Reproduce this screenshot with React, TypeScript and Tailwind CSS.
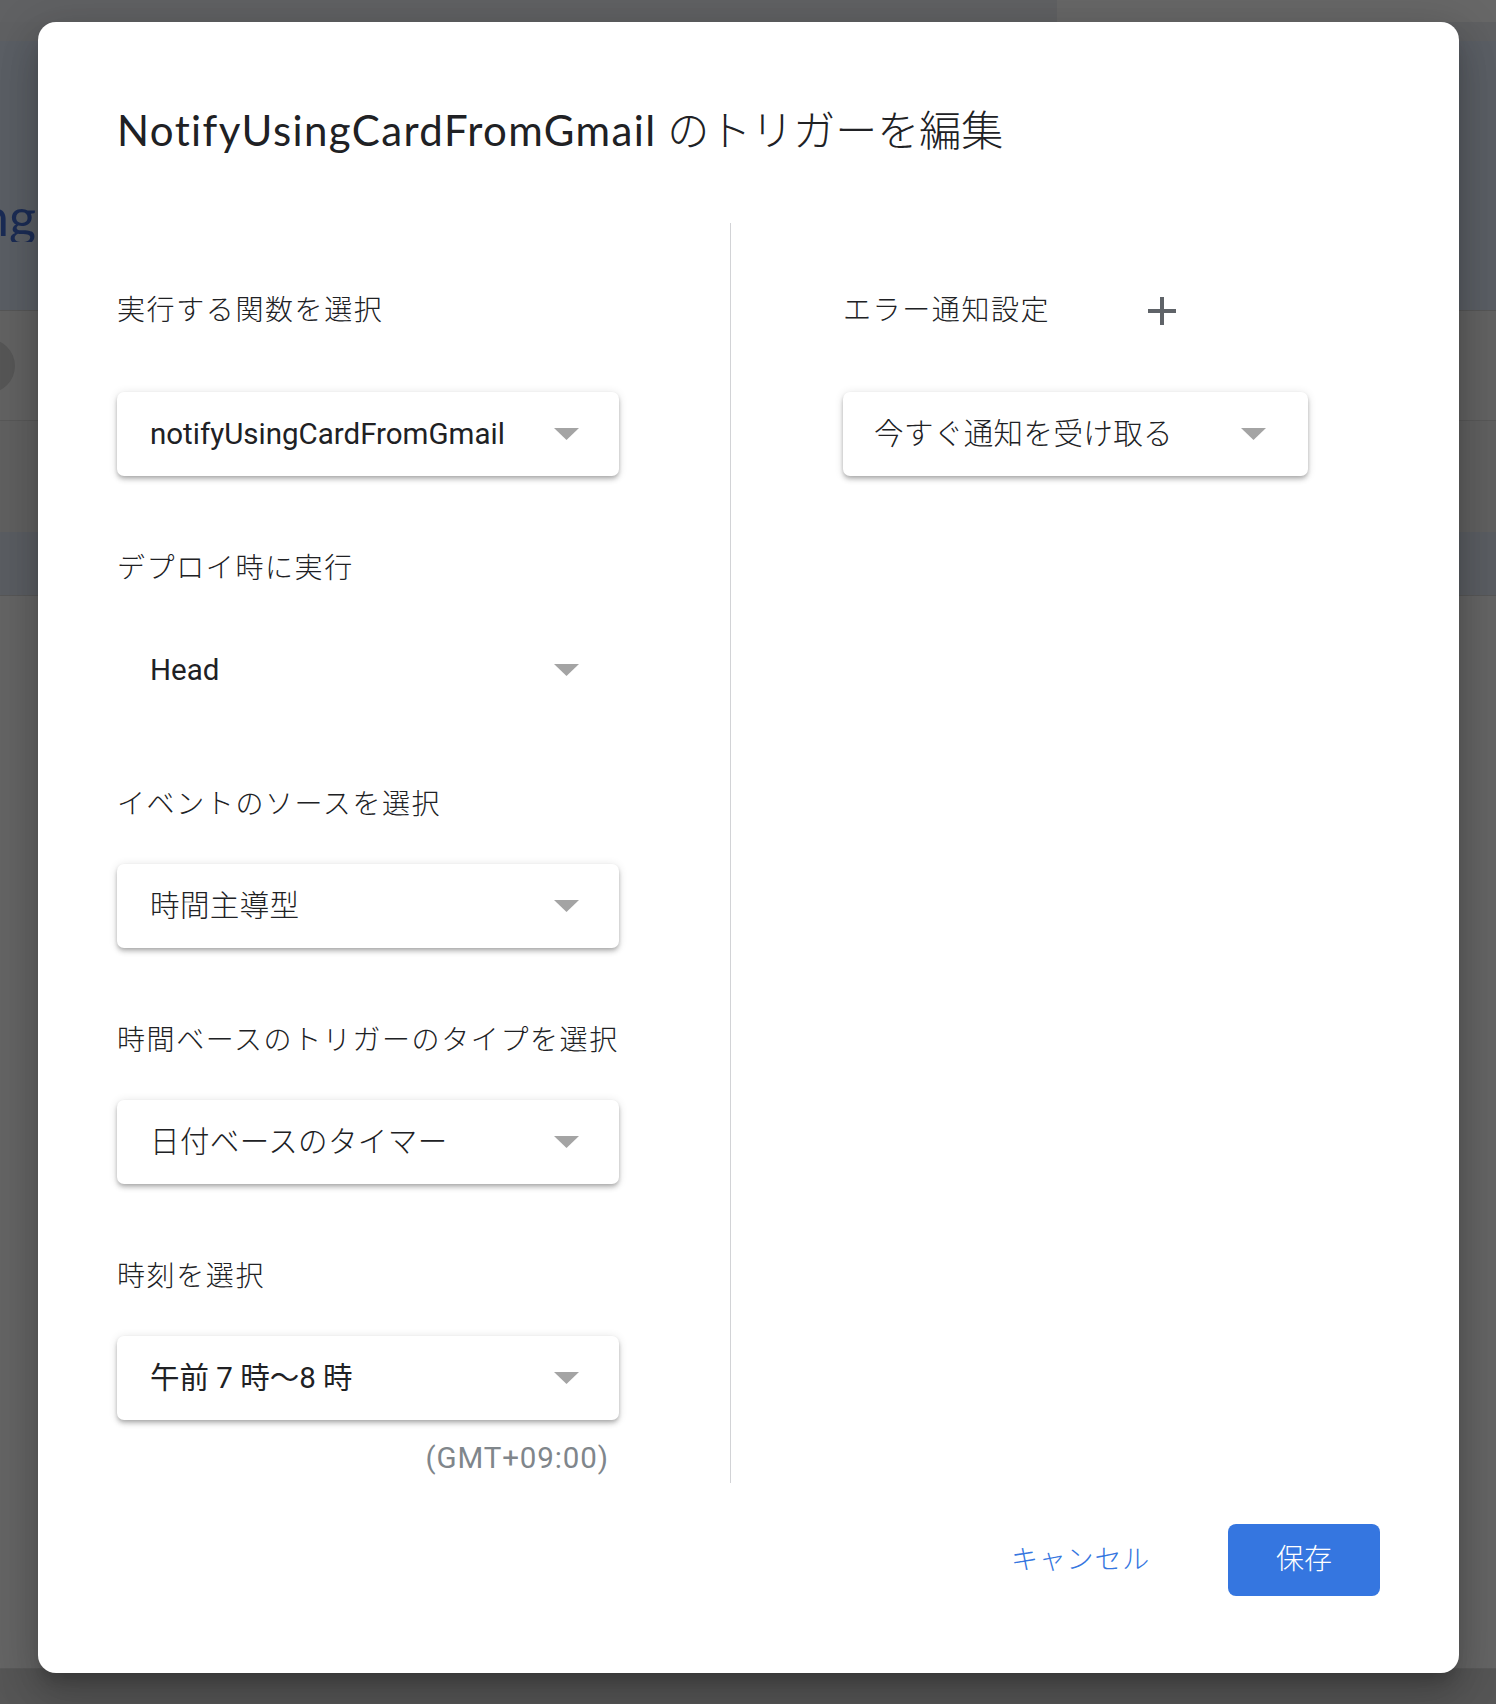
import React from 'react';

const FIELD_SHADOW =
  'shadow-[0_4px_5px_rgba(0,0,0,0.14),0_1px_10px_rgba(0,0,0,0.12),0_2px_4px_-1px_rgba(0,0,0,0.2)]';

function Arrow() {
  return (
    <svg width="25" height="12" viewBox="0 0 25 12" className="shrink-0">
      <path d="M0 0 L25 0 L12.5 12 Z" fill="#a4a4a4" />
    </svg>
  );
}

function Label({ children }: { children: React.ReactNode }) {
  return (
    <div className="h-[40px] leading-[40px] text-[28px] font-light tracking-[1.6px] text-[#202124] whitespace-nowrap">
      {children}
    </div>
  );
}

function Select({
  value,
  boxed = true,
  wide = true,
  light = false,
}: {
  value: string;
  boxed?: boolean;
  wide?: boolean;
  light?: boolean;
}) {
  return (
    <div
      className={`flex items-center justify-between h-[84px] rounded-[7px] ${
        wide ? 'w-[502px] pl-[33px] pr-[40px]' : 'w-[465px] pl-[31px] pr-[42px]'
      } ${boxed ? `bg-white ${FIELD_SHADOW}` : ''}`}
    >
      <span className={`text-[29.5px] text-[#202124] whitespace-nowrap ${light ? 'font-light tracking-[0.4px]' : ''}`}>
        {value}
      </span>
      <Arrow />
    </div>
  );
}

function Plus() {
  return (
    <svg width="30" height="30" viewBox="0 0 30 30" className="shrink-0">
      <path d="M15 1 V29 M1 15 H29" stroke="#5f6368" strokeWidth="4" />
    </svg>
  );
}

export default function App() {
  return (
    <div className="relative w-[1496px] h-[1704px] overflow-hidden bg-[#646464] font-['Roboto','Noto_Sans_CJK_JP',sans-serif]">
      {/* page behind the scrim */}
      <div className="flex flex-col h-full">
        <div className="flex h-[22px]">
          <div className="flex-1 bg-[#606163]" />
          <div className="w-[439px] bg-[#676767]" />
        </div>
        <div className="h-[19px] bg-[#5f6062]" />
        <div className="h-[269px] bg-[#5b5f65] pt-[149px]">
          <div className="w-[36px] overflow-hidden flex justify-end">
            <span className="text-[52px] leading-none text-[#1b2c55] font-['Lato',sans-serif] whitespace-nowrap">ng</span>
          </div>
        </div>
        <div className="h-px bg-[#575757]" />
        <div className="h-[109px] bg-[#636363] pt-[28px]">
          <div className="w-[54px] h-[54px] -ml-[39px] rounded-full bg-[#575757]" />
        </div>
        <div className="h-px bg-[#595959]" />
        <div className="h-[111px] bg-[#616161]" />
        <div className="h-[63px] bg-[#5b5e63]" />
        <div className="h-px bg-[#585858]" />
        <div className="flex-1 bg-[#656565]" />
        <div className="h-px bg-[#5a5a5a]" />
        <div className="h-[35px] bg-[#565656]" />
      </div>

      {/* dialog */}
      <div className="absolute left-[38px] top-[22px] w-[1421px] h-[1651px] bg-white rounded-[18px] shadow-[0_24px_38px_3px_rgba(0,0,0,0.14),0_9px_46px_8px_rgba(0,0,0,0.12),0_11px_15px_-7px_rgba(0,0,0,0.2)] pl-[79px] pr-[79px] pt-[80px] flex flex-col">
        <h1 className="h-[56px] leading-[56px] text-[42px] text-[#202124] whitespace-nowrap font-['Lato','Noto_Sans_CJK_JP',sans-serif]">
          <span className="tracking-[1.4px]">NotifyUsingCardFromGmail</span>{' '}
          <span className="font-light">のトリガーを編集</span>
        </h1>

        <div className="flex mt-[65px]">
          {/* left column */}
          <div className="w-[613px] pt-[68px] pb-[7px] flex flex-col">
            <Label>実行する関数を選択</Label>
            <div className="mt-[61px]">
              <Select value="notifyUsingCardFromGmail" />
            </div>

            <div className="mt-[73px]">
              <Label>デプロイ時に実行</Label>
            </div>
            <div className="mt-[39px]">
              <Select value="Head" boxed={false} />
            </div>

            <div className="mt-[73px]">
              <Label>イベントのソースを選択</Label>
            </div>
            <div className="mt-[39px]">
              <Select value="時間主導型" light />
            </div>

            <div className="mt-[73px]">
              <Label>時間ベースのトリガーのタイプを選択</Label>
            </div>
            <div className="mt-[39px]">
              <Select value="日付ベースのタイマー" light />
            </div>

            <div className="mt-[73px]">
              <Label>時刻を選択</Label>
            </div>
            <div className="mt-[39px]">
              <Select value="午前 7 時〜8 時" />
            </div>

            <div className="w-[502px] mt-[20px] pr-[10px] text-right h-[36px] leading-[36px] text-[29.5px] tracking-[0.9px] text-[#80868b]">
              (GMT+09:00)
            </div>
          </div>

          {/* right column */}
          <div className="flex-1 border-l border-[#d2d3d6] pl-[112px] pt-[68px]">
            <div className="flex items-center">
              <Label>エラー通知設定</Label>
              <div className="ml-[97px]">
                <Plus />
              </div>
            </div>
            <div className="mt-[61px]">
              <Select value="今すぐ通知を受け取る" wide={false} light />
            </div>
          </div>
        </div>

        {/* actions */}
        <div className="flex justify-end items-center mt-[41px]">
          <button className="text-[27px] font-light tracking-[0.8px] text-[#3576e0] leading-[72px] h-[72px]">キャンセル</button>
          <button className="ml-[78px] w-[152px] h-[72px] rounded-[8px] bg-[#3576e0] text-white text-[28px] font-light">保存</button>
        </div>
      </div>
    </div>
  );
}
